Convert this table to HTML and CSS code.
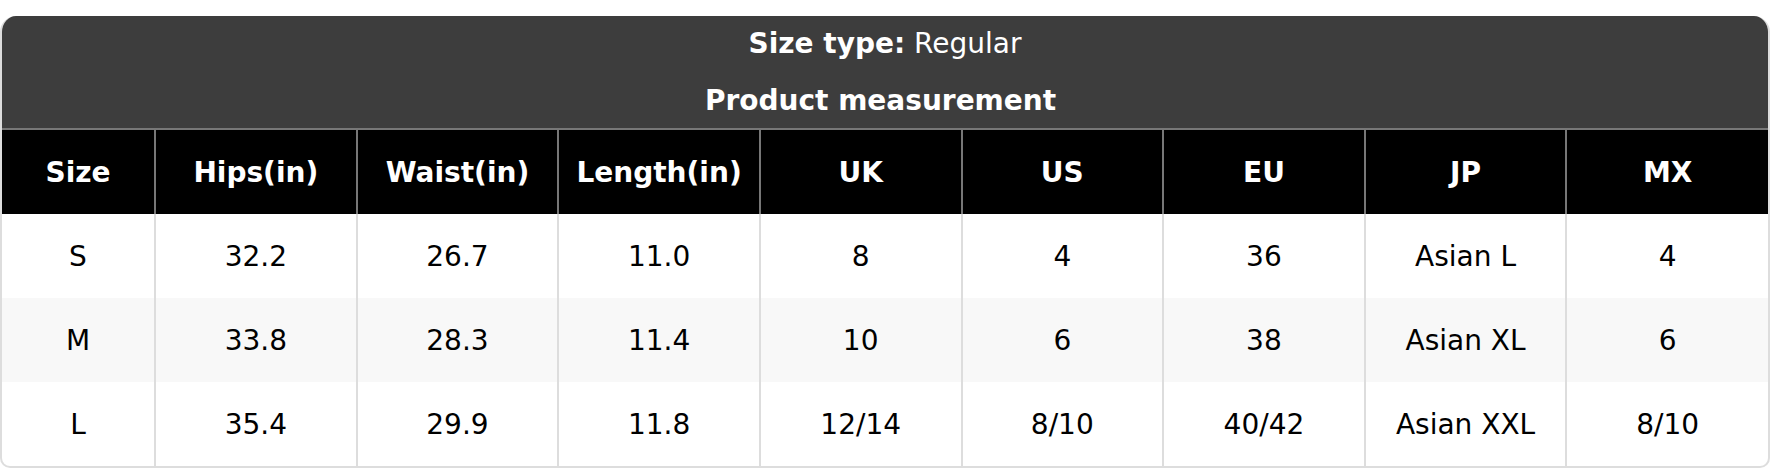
FILE: index.html
```html
<!DOCTYPE html>
<html>
<head>
<meta charset="utf-8">
<link rel="stylesheet" href="styles.css">
</head>
<body>
<div class="card">
  <div class="caption">
    <div class="caption-line"><b>Size type:</b> Regular</div>
    <div class="caption-line caption-sub"><b>Product measurement</b></div>
  </div>
  <table class="chart">
    <colgroup>
      <col class="col-size">
      <col><col><col><col><col><col><col><col>
    </colgroup>
    <thead>
      <tr>
        <th>Size</th><th>Hips(in)</th><th>Waist(in)</th><th>Length(in)</th><th>UK</th><th>US</th><th>EU</th><th>JP</th><th>MX</th>
      </tr>
    </thead>
    <tbody>
      <tr>
        <td>S</td><td>32.2</td><td>26.7</td><td>11.0</td><td>8</td><td>4</td><td>36</td><td>Asian L</td><td>4</td>
      </tr>
      <tr class="alt">
        <td>M</td><td>33.8</td><td>28.3</td><td>11.4</td><td>10</td><td>6</td><td>38</td><td>Asian XL</td><td>6</td>
      </tr>
      <tr>
        <td>L</td><td>35.4</td><td>29.9</td><td>11.8</td><td>12/14</td><td>8/10</td><td>40/42</td><td>Asian XXL</td><td>8/10</td>
      </tr>
    </tbody>
  </table>
</div>
</body>
</html>
```
FILE: styles.css
```css
html, body {
  margin: 0;
  padding: 0;
  background: #ffffff;
}
body {
  padding-top: 16px;
  font-family: "DejaVu Sans", Verdana, sans-serif;
}
.card {
  width: 1770px;
  box-sizing: border-box;
  border: 2px solid #dddddd;
  border-top: none;
  border-radius: 16px 16px 10px 10px;
  overflow: hidden;
}
.caption {
  background: #3d3d3d;
  color: #ffffff;
  text-align: center;
  font-size: 28px;
}
.caption-line {
  height: 56px;
  line-height: 56px;
}
.caption-line:first-child {
  line-height: 55px;
}
.caption-sub {
  line-height: 57px;
  padding-right: 9px;
}
.caption-line b {
  font-weight: bold;
}
.chart {
  width: 100%;
  border-collapse: collapse;
  table-layout: fixed;
}
.col-size {
  width: 153px;
}
.chart th {
  background: #000000;
  color: #ffffff;
  font-weight: bold;
  font-size: 28px;
  height: 84px;
  padding: 0;
  text-align: center;
  border-top: 2px solid #777777;
  border-left: 2px solid #777777;
}
.chart th:first-child {
  border-left: none;
}
.chart td {
  height: 84px;
  padding: 0;
  text-align: center;
  font-size: 28px;
  color: #000000;
  border-left: 2px solid #dddddd;
}
.chart td:first-child {
  border-left: none;
}
.chart tr.alt td {
  background: #f8f8f8;
}
```
